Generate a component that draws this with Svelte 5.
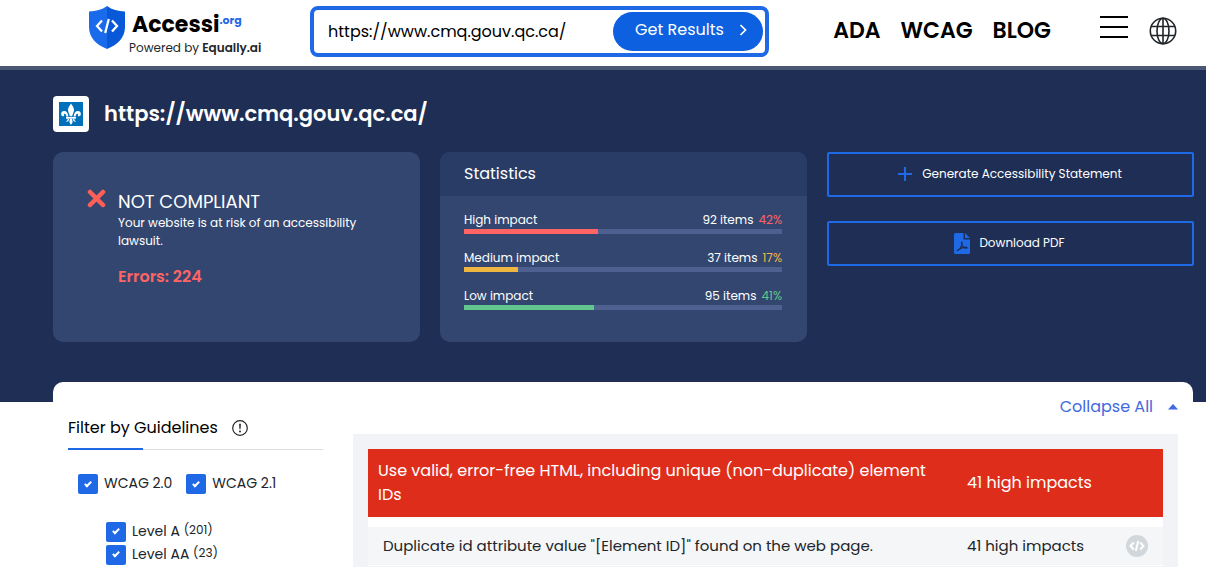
<script>
  let url = $state('https://www.cmq.gouv.qc.ca/');

  const links = ['ADA', 'WCAG', 'BLOG'];

  const stats = [
    { label: 'High impact', items: 92, percent: 42, color: '#ff6464' },
    { label: 'Medium impact', items: 37, percent: 17, color: '#efb642' },
    { label: 'Low impact', items: 95, percent: 41, color: '#61c78c' }
  ];

  let guidelines = $state([
    { label: 'WCAG 2.0', checked: true },
    { label: 'WCAG 2.1', checked: true }
  ]);

  let levels = $state([
    { label: 'Level A', count: 201, checked: true },
    { label: 'Level AA', count: 23, checked: true }
  ]);
</script>

<header class="topbar">
  <a class="logo" href="#home">
    <svg class="shield" viewBox="0 0 36 43" aria-hidden="true">
      <path d="M18 0C13 4 7 5 0 5.500V21C0 32 8 39 18 43Z" fill="#1a6bec" />
      <path d="M18 0C23 4 29 5 36 5.500V21C36 32 28 39 18 43Z" fill="#0859d8" />
      <path d="M13 14.500L8 20L13 25.500M23 14.500L28 20L23 25.500M19.800 13L16.200 27" fill="none" stroke="#fff" stroke-width="2.300" />
    </svg>
    <span class="brand">
      <span class="name">Accessi<span class="tld">.org</span></span>
      <span class="powered">Powered by <b>Equally.ai</b></span>
    </span>
  </a>

  <form class="search" onsubmit={(e) => e.preventDefault()}>
    <input type="text" aria-label="Website address" bind:value={url} />
    <button type="submit">
      Get Results
      <svg width="8" height="12" viewBox="0 0 8 12" aria-hidden="true">
        <path d="M1.500 1L6.500 6L1.500 11" fill="none" stroke="#fff" stroke-width="1.700" />
      </svg>
    </button>
  </form>

  <nav>
    {#each links as link}
      <a href="#{link.toLowerCase()}">{link}</a>
    {/each}
  </nav>

  <div class="tools">
    <button type="button" aria-label="Menu">
      <svg width="30" height="26" viewBox="0 0 30 26" aria-hidden="true">
        <path d="M1 2H29M1 12H29M1 22H29" stroke="#000" stroke-width="2" />
      </svg>
    </button>
    <button type="button" aria-label="Language">
      <svg width="28" height="28" viewBox="0 0 28 28" fill="none" stroke="#212529" stroke-width="1.600" aria-hidden="true">
        <circle cx="14" cy="14" r="12.700" />
        <ellipse cx="14" cy="14" rx="6" ry="12.700" />
        <path d="M14 1V27M2.500 9.500H25.500M2.500 18.500H25.500" />
      </svg>
    </button>
  </div>
</header>

<section class="hero">
  <div class="site">
    <span class="favicon">
      <svg width="24" height="24" viewBox="0 0 24 24" aria-hidden="true">
        <rect width="24" height="24" fill="#0070bb" />
        <g fill="#fff">
          <path d="M12 1.500C13.500 4 15 5.500 15 8C15 10.500 13.300 12 13.200 14.200H10.800C10.700 12 9 10.500 9 8C9 5.500 10.500 4 12 1.500Z" />
          <path d="M9.500 14.500C9 11 7.500 9 5.200 9C3 9 1.800 10.700 2.200 12.600C2.500 14.200 4.200 14.700 5.300 13.700C4.300 12.500 5.400 11.500 6.200 12C7.200 12.600 7.300 13.500 7.300 14.500Z" />
          <path d="M14.500 14.500C15 11 16.500 9 18.800 9C21 9 22.200 10.700 21.800 12.600C21.500 14.200 19.800 14.700 18.700 13.700C19.700 12.500 18.600 11.500 17.800 12C16.800 12.600 16.700 13.500 16.700 14.500Z" />
          <path d="M7 15H17V16.700H7Z" />
          <path d="M11 17H13L13.700 20L12 23L10.300 20ZM8.700 17H10.200C10 19 8.700 20 6.800 19.500C8 19 8.600 18.200 8.700 17ZM15.300 17H13.800C14 19 15.300 20 17.200 19.500C16 19 15.400 18.200 15.300 17Z" />
        </g>
      </svg>
    </span>
    <h1>https://www.cmq.gouv.qc.ca/</h1>
  </div>

  <div class="cards">
    <article class="card verdict">
      <svg width="19" height="19" viewBox="0 0 19 19" aria-hidden="true">
        <path d="M3 3L16 16M16 3L3 16" stroke="#ff5f57" stroke-width="4.500" stroke-linecap="round" />
      </svg>
      <div>
        <h2>NOT COMPLIANT</h2>
        <p>Your website is at risk of an accessibility lawsuit.</p>
        <strong>Errors: 224</strong>
      </div>
    </article>

    <article class="card stats">
      <h2>Statistics</h2>
      <ul>
        {#each stats as stat}
          <li>
            <div class="line">
              <span>{stat.label}</span>
              <span class="items">{stat.items} items</span>
              <span style:color={stat.color}>{stat.percent}%</span>
            </div>
            <div class="track">
              <div class="fill" style:width="{stat.percent}%" style:background={stat.color}></div>
            </div>
          </li>
        {/each}
      </ul>
    </article>

    <div class="actions">
      <button type="button">
        <svg width="16" height="16" viewBox="0 0 16 16" aria-hidden="true">
          <path d="M8 1V15M1 8H15" stroke="#1f69e6" stroke-width="2" />
        </svg>
        Generate Accessibility Statement
      </button>
      <button type="button">
        <svg width="16" height="21" viewBox="0 0 16 21" aria-hidden="true">
          <path d="M1.500 0H9.500V6.500H16V19.500Q16 21 14.500 21H1.500Q0 21 0 19.500V1.500Q0 0 1.500 0Z" fill="#1f69e6" />
          <path d="M11 0L16 5H11Z" fill="#1f69e6" />
          <path d="M8 9C6.800 9 7.800 13 10 14.500C12 15.800 13.500 15.200 13 14.500C12 13.500 6 15 3.500 17.500C5.500 17.500 8.800 12 8 9Z" fill="none" stroke="#1e2e54" stroke-width="1.200" />
        </svg>
        Download PDF
      </button>
    </div>
  </div>
</section>

<main class="results">
  <aside>
    <h2>
      Filter by Guidelines
      <svg width="16" height="16" viewBox="0 0 16 16" aria-hidden="true">
        <circle cx="8" cy="8" r="7.300" fill="none" stroke="#212529" stroke-width="1.200" />
        <path d="M7.100 3.800H8.900L8.500 9.300H7.500Z" fill="#212529" />
        <circle cx="8" cy="11.500" r="1" fill="#212529" />
      </svg>
    </h2>
    <div class="rule"><span></span></div>
    <div class="guidelines">
      {#each guidelines as item}
        <label><input type="checkbox" bind:checked={item.checked} />{item.label}</label>
      {/each}
    </div>
    <div class="levels">
      {#each levels as item}
        <label><input type="checkbox" bind:checked={item.checked} /><span>{item.label} <small>({item.count})</small></span></label>
      {/each}
    </div>
  </aside>

  <section class="report">
    <button type="button" class="collapse">
      Collapse All
      <svg width="10" height="6" viewBox="0 0 10 6" aria-hidden="true">
        <path d="M5 0L10 5.500H0Z" fill="#4169e1" />
      </svg>
    </button>
    <div class="panel">
      <table>
        <thead>
          <tr>
            <th class="issue" scope="col"><span>Use valid, error-free HTML, including unique (non-duplicate) element IDs</span></th>
            <th scope="col" colspan="2">41 high impacts</th>
          </tr>
        </thead>
        <tbody>
          <tr>
            <td class="issue">Duplicate id attribute value "[Element ID]" found on the web page.</td>
            <td>41 high impacts</td>
            <td class="code">
              <button type="button" aria-label="Show code">
                <svg width="22" height="22" viewBox="0 0 22 22" aria-hidden="true">
                  <circle cx="11" cy="11" r="11" fill="#d2d7db" />
                  <path d="M7.800 7.500L4.500 11L7.800 14.500M14.200 7.500L17.500 11L14.200 14.500M12.200 6L9.800 16" fill="none" stroke="#fff" stroke-width="2" />
                </svg>
              </button>
            </td>
          </tr>
        </tbody>
      </table>
    </div>
  </section>
</main>

<style>
  :global(body) {
    margin: 0;
    background: #fff;
    color: #212529;
    font-family: Poppins, Inter, sans-serif;
    font-size: 16px;
    line-height: 24px;
  }

  h1,
  h2,
  p,
  ul {
    margin: 0;
    padding: 0;
    font-size: 16px;
    font-weight: 400;
  }

  button,
  input {
    font: inherit;
    color: inherit;
    margin: 0;
  }

  button {
    padding: 0;
    border: 0;
    background: none;
    cursor: pointer;
  }

  svg {
    display: block;
    flex: none;
  }

  a {
    color: inherit;
    text-decoration: none;
  }

  .topbar {
    display: flex;
    align-items: center;
    height: 66px;
    padding: 0 29px 0 89px;
    box-sizing: border-box;
  }

  .logo {
    display: flex;
    align-items: flex-start;
    flex: 0 0 221px;
    gap: 4px;
  }

  .shield {
    width: 36px;
    height: 43px;
    margin-bottom: 12px;
  }

  .brand {
    display: flex;
    flex-direction: column;
    padding-top: 6px;
  }

  .name {
    display: flex;
    align-items: flex-start;
    color: #000;
    font-size: 22px;
    font-weight: 700;
    line-height: 26px;
    padding-left: 3px;
  }

  .tld {
    color: #1f69e6;
    font-size: 11px;
    line-height: 16px;
  }

  .powered {
    font-size: 12px;
    line-height: 20px;
    white-space: nowrap;
  }

  .powered b {
    font-weight: 600;
  }

  .search {
    display: flex;
    flex: 0 1 459px;
    box-sizing: border-box;
    min-width: 0;
    margin-bottom: 3px;
    padding: 2px;
    border: 4px solid #1f69e6;
    border-radius: 8px;
  }

  .search input {
    flex: 1;
    min-width: 0;
    padding: 0 12px;
    border: 0;
    outline: 0;
    color: #000;
  }

  .search button {
    display: flex;
    align-items: center;
    justify-content: center;
    gap: 15px;
    flex: 0 0 150px;
    height: 39px;
    padding: 0 0 3px 6px;
    box-sizing: border-box;
    border-radius: 20px;
    background: #0d61e1;
    color: #fff;
  }

  nav {
    display: flex;
    flex: none;
    gap: 20px;
    margin: 0 48px 4px auto;
    color: #000;
    font-size: 22px;
    font-weight: 600;
  }

  .tools {
    display: flex;
    align-items: center;
    gap: 20px;
    padding-bottom: 10px;
  }

  .tools button:last-child {
    padding-top: 6px;
  }

  .hero {
    padding: 26px 12px 60px 53px;
    border-top: 4px solid #4a5876;
    background: #1e2e54;
    color: #fff;
  }

  .site {
    display: flex;
    align-items: center;
    gap: 15px;
  }

  .favicon {
    padding: 6px;
    border-radius: 4px;
    background: #fff;
  }

  h1 {
    font-size: 21px;
    font-weight: 600;
  }

  .cards {
    display: grid;
    grid-template-columns: repeat(3, minmax(0, 1fr));
    gap: 20px;
    margin-top: 20px;
  }

  .card {
    min-height: 190px;
    border-radius: 10px;
    background: #334670;
    overflow: hidden;
  }

  .verdict {
    display: flex;
    gap: 12px;
    padding: 37px 34px;
    box-sizing: border-box;
  }

  .verdict h2 {
    font-size: 18px;
    line-height: 25px;
  }

  .verdict p {
    font-size: 12px;
    line-height: 18px;
  }

  .verdict strong {
    display: block;
    margin-top: 15px;
    color: #ff6464;
    font-weight: 600;
  }

  .stats h2 {
    padding: 10px 24px;
    background: #293c65;
  }

  .stats ul {
    display: flex;
    flex-direction: column;
    gap: 15px;
    padding: 15px 25px 15px 24px;
    list-style: none;
    font-size: 12px;
    line-height: 18px;
  }

  .line {
    display: flex;
    gap: 5px;
  }

  .items {
    margin-left: auto;
  }

  .track {
    height: 5px;
    background: #4e608f;
  }

  .fill {
    height: 5px;
  }

  .actions {
    display: flex;
    flex-direction: column;
    gap: 24px;
  }

  .actions button {
    display: flex;
    align-items: center;
    justify-content: center;
    gap: 9px;
    height: 45px;
    padding-right: 2px;
    padding-bottom: 1px;
    border: 2px solid #1f69e6;
    border-radius: 2px;
    font-size: 12px;
  }

  .results {
    display: grid;
    grid-template-columns: minmax(0, 255fr) minmax(0, 825fr);
    gap: 30px;
    margin: -20px 13px 0 53px;
    padding: 0 15px;
    border-radius: 10px 10px 0 0;
    background: #fff;
  }

  aside {
    padding-top: 34px;
    font-size: 14px;
  }

  aside h2 {
    display: flex;
    align-items: center;
    gap: 14px;
    color: #000;
  }

  .rule {
    margin-top: 8px;
    border-bottom: 1px solid #dcdcdc;
  }

  .rule span {
    display: block;
    width: 75px;
    height: 2px;
    margin-bottom: -1px;
    background: #1f69e6;
  }

  .guidelines {
    display: flex;
    gap: 14px;
    padding: 21px 10px 24px;
  }

  label {
    display: flex;
    align-items: center;
    gap: 6px;
    white-space: nowrap;
  }

  input[type='checkbox'] {
    appearance: none;
    display: grid;
    place-items: center;
    width: 20px;
    height: 20px;
    margin-top: 2px;
    border-radius: 2px;
    background: #1f69e6;
  }

  input[type='checkbox']:checked::before {
    content: '';
    width: 2px;
    height: 5px;
    margin-bottom: 2px;
    border: solid #fff;
    border-width: 0 2px 2px 0;
    transform: rotate(45deg);
  }

  .levels {
    display: flex;
    flex-direction: column;
    padding-left: 38px;
  }

  .levels label {
    height: 23px;
  }

  small {
    font-size: 12px;
    line-height: 12px;
    vertical-align: 2px;
  }

  .report {
    padding-top: 13px;
  }

  .collapse {
    display: flex;
    align-items: center;
    gap: 15px;
    margin-left: auto;
    color: #4169e1;
  }

  .panel {
    margin-top: 15px;
    padding: 15px;
    background: #f2f3f7;
  }

  table {
    width: 100%;
    border-collapse: collapse;
    background: #fff;
    text-align: left;
  }

  th,
  td {
    padding: 10px;
    font-weight: 400;
  }

  th {
    border-bottom: 10px solid #fff;
    background: #de2e1b;
    color: #fff;
    background-clip: padding-box;
  }

  th span {
    display: block;
    max-width: 555px;
  }

  .issue {
    width: 569px;
  }

  td {
    padding: 7px 10px;
    border-bottom: 1px solid #fff;
    background: #f4f6f8;
    font-size: 15px;
  }

  td.issue {
    padding-left: 15px;
    width: 564px;
  }

  td.code {
    padding-right: 15px;
  }

  .code button {
    display: block;
    margin-left: auto;
  }
</style>
